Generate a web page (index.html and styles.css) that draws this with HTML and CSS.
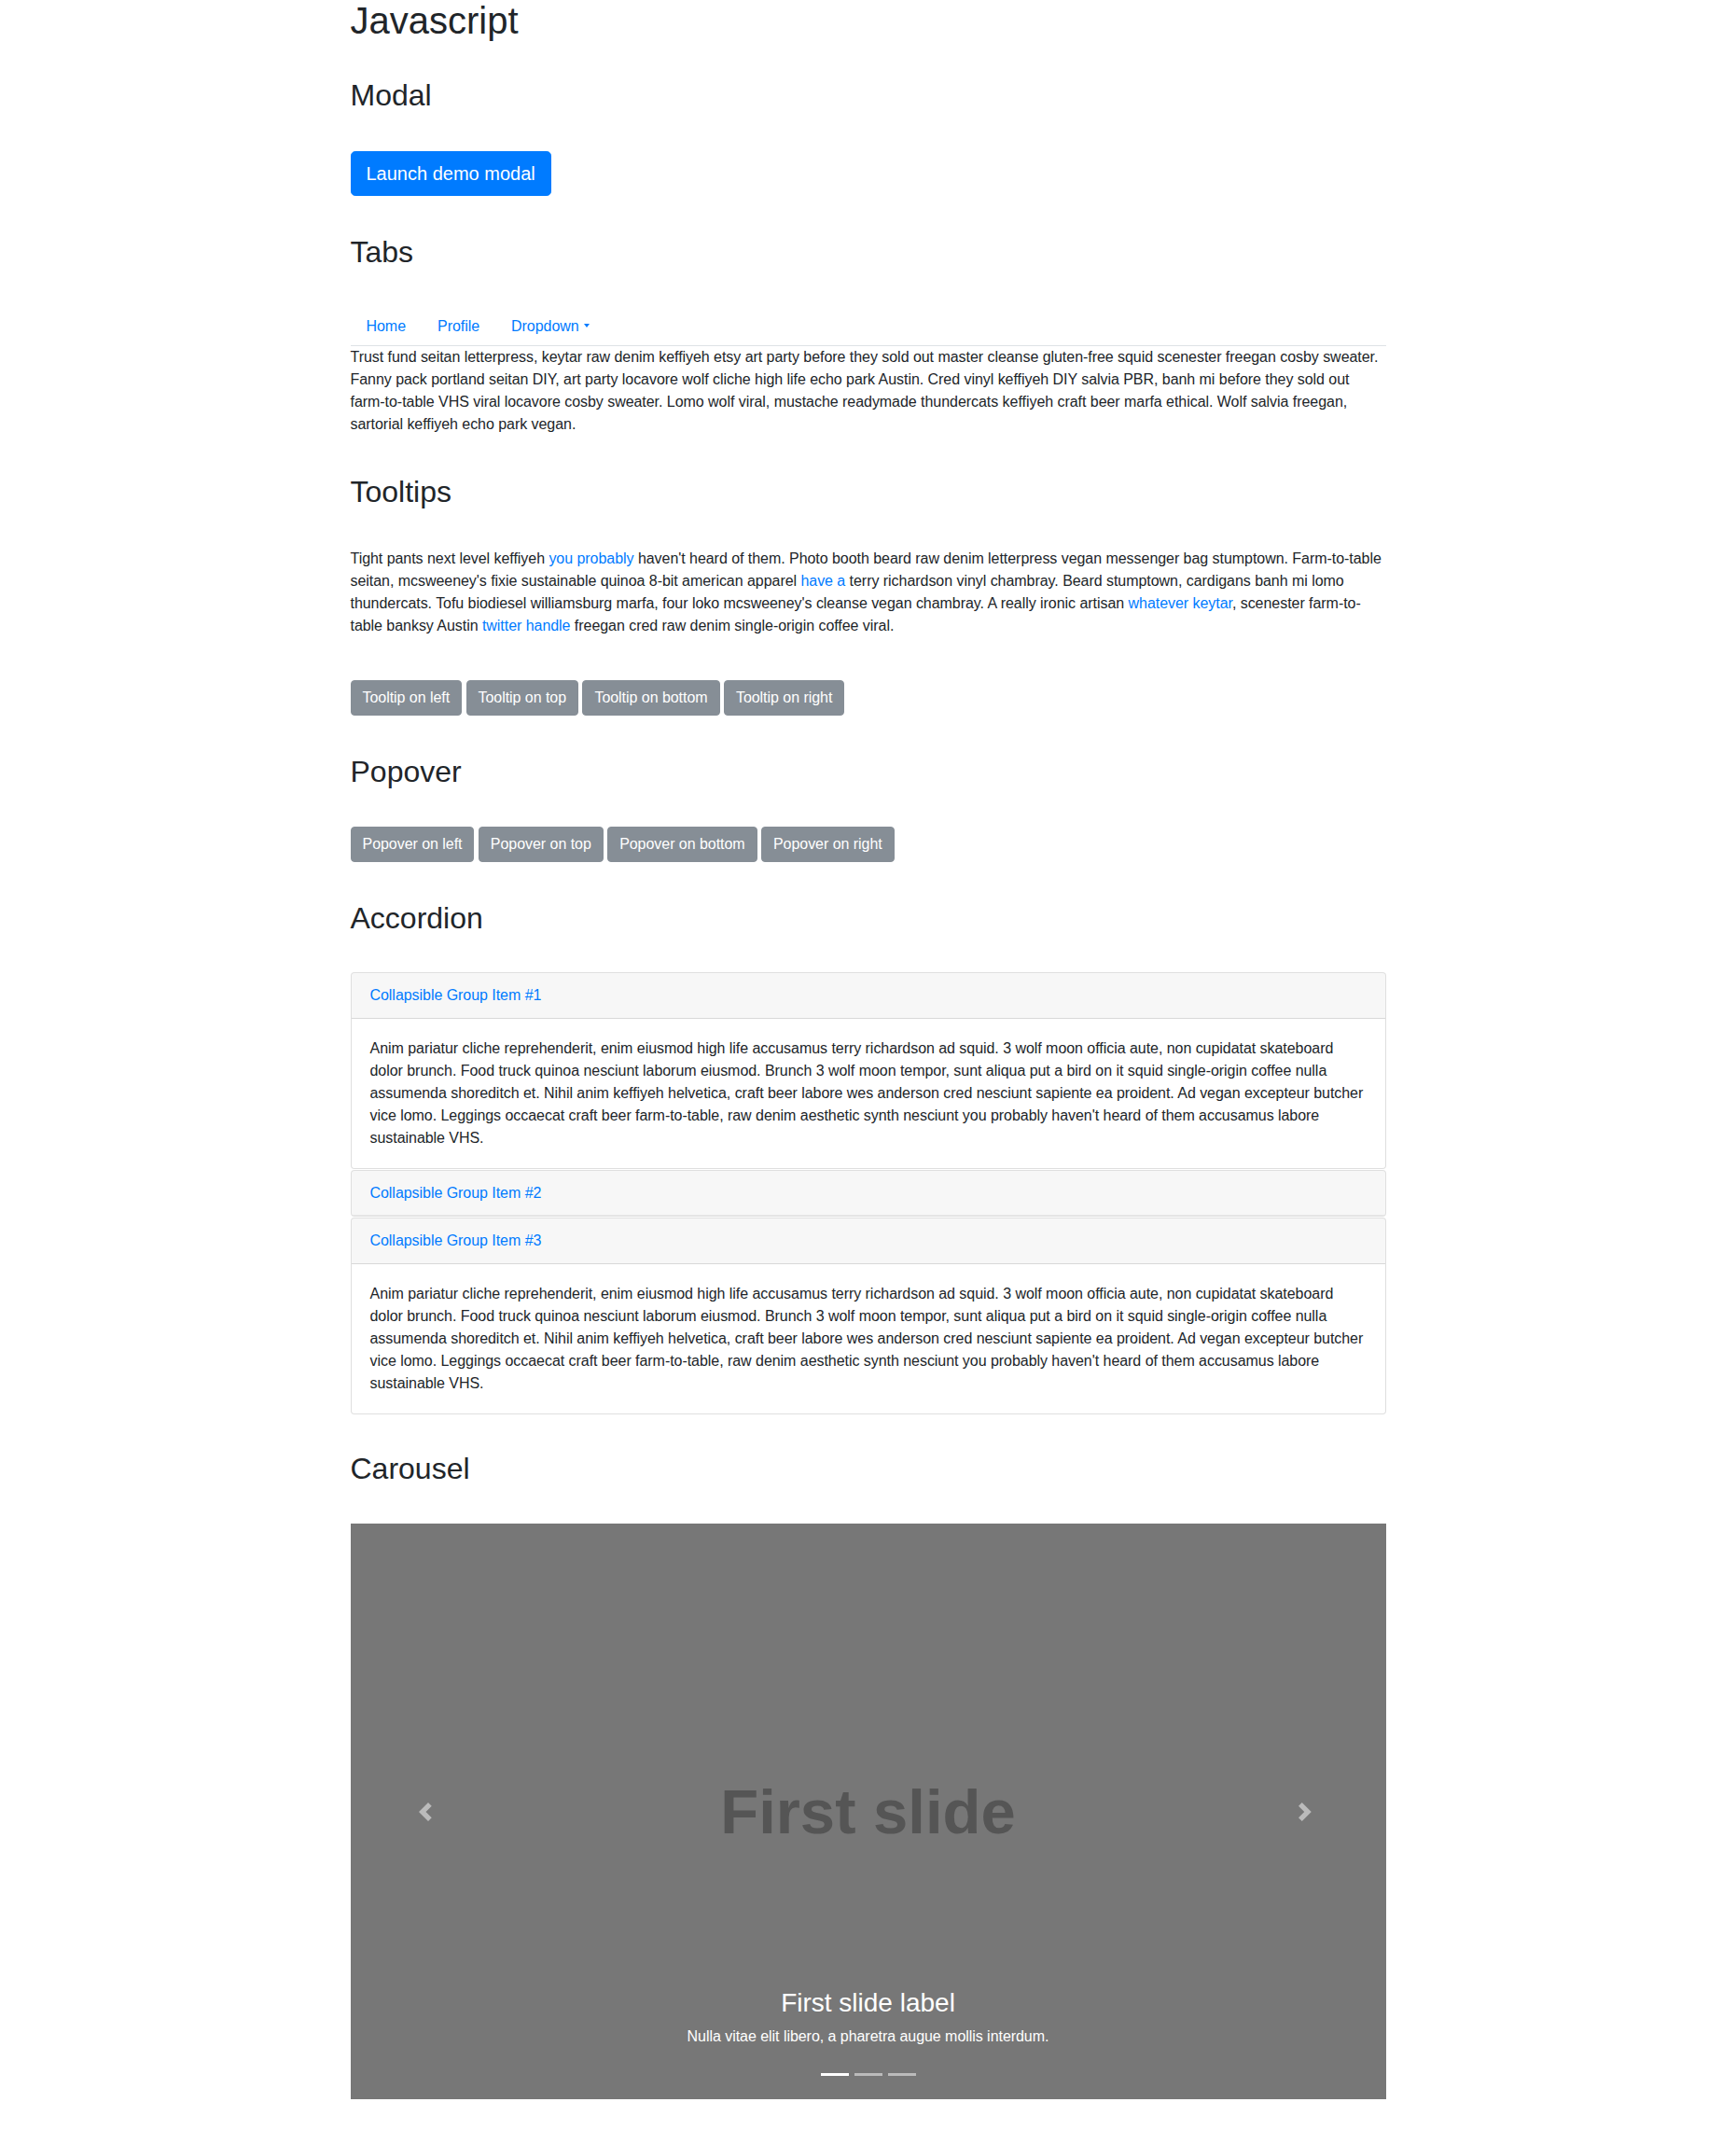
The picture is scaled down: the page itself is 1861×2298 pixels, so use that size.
FILE: index.html
```html
<!DOCTYPE html>
<html lang="en">
<head>
<meta charset="utf-8">
<title>Javascript</title>
<link rel="stylesheet" href="styles.css">
</head>
<body>
<div class="container">
  <h1 class="page-title">Javascript</h1>

  <section class="section section-first">
    <h2 class="section-title">Modal</h2>
    <button class="btn btn-primary btn-lg" type="button">Launch demo modal</button>
  </section>

  <section class="section">
    <h2 class="section-title title-tabs">Tabs</h2>
    <ul class="nav-tabs">
      <li class="nav-item"><a class="nav-link" href="#">Home</a></li>
      <li class="nav-item"><a class="nav-link" href="#">Profile</a></li>
      <li class="nav-item"><a class="nav-link" href="#">Dropdown<span class="caret"></span></a></li>
    </ul>
    <p class="tab-pane">Trust fund seitan letterpress, keytar raw denim keffiyeh etsy art party before they sold out master cleanse gluten-free squid scenester freegan cosby sweater. Fanny pack portland seitan DIY, art party locavore wolf cliche high life echo park Austin. Cred vinyl keffiyeh DIY salvia PBR, banh mi before they sold out farm-to-table VHS viral locavore cosby sweater. Lomo wolf viral, mustache readymade thundercats keffiyeh craft beer marfa ethical. Wolf salvia freegan, sartorial keffiyeh echo park vegan.</p>
  </section>

  <section class="section">
    <h2 class="section-title">Tooltips</h2>
    <p class="tooltip-text">Tight pants next level keffiyeh <a href="#">you probably</a> haven't heard of them. Photo booth beard raw denim letterpress vegan messenger bag stumptown. Farm-to-table seitan, mcsweeney's fixie sustainable quinoa 8-bit american apparel <a href="#">have a</a> terry richardson vinyl chambray. Beard stumptown, cardigans banh mi lomo thundercats. Tofu biodiesel williamsburg marfa, four loko mcsweeney's cleanse vegan chambray. A really ironic artisan <a href="#">whatever keytar</a>, scenester farm-to-table banksy Austin <a href="#">twitter handle</a> freegan cred raw denim single-origin coffee viral.</p>
    <div class="btn-row">
      <button class="btn btn-secondary" type="button">Tooltip on left</button>
      <button class="btn btn-secondary" type="button">Tooltip on top</button>
      <button class="btn btn-secondary" type="button">Tooltip on bottom</button>
      <button class="btn btn-secondary" type="button">Tooltip on right</button>
    </div>
  </section>

  <section class="section">
    <h2 class="section-title title-popover">Popover</h2>
    <div class="btn-row">
      <button class="btn btn-secondary" type="button">Popover on left</button>
      <button class="btn btn-secondary" type="button">Popover on top</button>
      <button class="btn btn-secondary" type="button">Popover on bottom</button>
      <button class="btn btn-secondary" type="button">Popover on right</button>
    </div>
  </section>

  <section class="section">
    <h2 class="section-title title-accordion">Accordion</h2>
    <div class="accordion">
      <div class="card">
        <div class="card-header"><a href="#">Collapsible Group Item #1</a></div>
        <div class="card-body">Anim pariatur cliche reprehenderit, enim eiusmod high life accusamus terry richardson ad squid. 3 wolf moon officia aute, non cupidatat skateboard dolor brunch. Food truck quinoa nesciunt laborum eiusmod. Brunch 3 wolf moon tempor, sunt aliqua put a bird on it squid single-origin coffee nulla assumenda shoreditch et. Nihil anim keffiyeh helvetica, craft beer labore wes anderson cred nesciunt sapiente ea proident. Ad vegan excepteur butcher vice lomo. Leggings occaecat craft beer farm-to-table, raw denim aesthetic synth nesciunt you probably haven't heard of them accusamus labore sustainable VHS.</div>
      </div>
      <div class="card card-collapsed">
        <div class="card-header"><a href="#">Collapsible Group Item #2</a></div>
      </div>
      <div class="card">
        <div class="card-header"><a href="#">Collapsible Group Item #3</a></div>
        <div class="card-body">Anim pariatur cliche reprehenderit, enim eiusmod high life accusamus terry richardson ad squid. 3 wolf moon officia aute, non cupidatat skateboard dolor brunch. Food truck quinoa nesciunt laborum eiusmod. Brunch 3 wolf moon tempor, sunt aliqua put a bird on it squid single-origin coffee nulla assumenda shoreditch et. Nihil anim keffiyeh helvetica, craft beer labore wes anderson cred nesciunt sapiente ea proident. Ad vegan excepteur butcher vice lomo. Leggings occaecat craft beer farm-to-table, raw denim aesthetic synth nesciunt you probably haven't heard of them accusamus labore sustainable VHS.</div>
      </div>
    </div>
  </section>

  <section class="section section-carousel">
    <h2 class="section-title title-carousel">Carousel</h2>
    <div class="carousel">
      <div class="slide-text">First slide</div>
      <a class="carousel-control control-prev" href="#" aria-label="Previous">
        <svg width="20" height="20" viewBox="0 0 8 8"><path fill="#fff" d="M4 0l-4 4 4 4 1.5-1.5-2.5-2.5 2.5-2.5-1.5-1.5z"/></svg>
      </a>
      <a class="carousel-control control-next" href="#" aria-label="Next">
        <svg width="20" height="20" viewBox="0 0 8 8"><path fill="#fff" d="M1.5 0l-1.5 1.5 2.5 2.5-2.5 2.5 1.5 1.5 4-4-4-4z"/></svg>
      </a>
      <div class="carousel-caption">
        <h3 class="caption-title">First slide label</h3>
        <p class="caption-text">Nulla vitae elit libero, a pharetra augue mollis interdum.</p>
      </div>
      <ol class="carousel-indicators">
        <li class="indicator active"></li>
        <li class="indicator"></li>
        <li class="indicator"></li>
      </ol>
    </div>
  </section>
</div>
</body>
</html>
```

FILE: styles.css
```css
* {
  box-sizing: border-box;
}

html,
body {
  margin: 0;
  padding: 0;
}

body {
  font-family: "Liberation Sans", Arial, Helvetica, sans-serif;
  font-size: 16px;
  line-height: 1.5;
  letter-spacing: -0.045px;
  color: #212529;
  background: #fff;
}

a {
  color: #007bff;
  text-decoration: none;
}

p {
  margin: 0;
}

.container {
  width: 1140px;
  margin: 0 auto;
  padding: 0 15px 48px;
}

.page-title {
  margin: 0;
  font-size: 40px;
  line-height: 44px;
  font-weight: 400;
  letter-spacing: 0;
}

.section {
  margin-top: 43.3px;
}

.section-first {
  margin-top: 41.3px;
}

.section-carousel {
  margin-top: 41.3px;
}

.section-title {
  margin: 0 0 41.5px;
  font-size: 32px;
  line-height: 35.2px;
  font-weight: 400;
  letter-spacing: 0;
}

.title-tabs {
  margin-bottom: 40px;
}

.title-popover,
.title-carousel {
  margin-bottom: 40.5px;
}

.title-accordion {
  margin-bottom: 39.5px;
}

/* Buttons */
.btn {
  display: inline-block;
  font-family: inherit;
  font-size: 16px;
  line-height: 24px;
  letter-spacing: inherit;
  padding: 6px 12px;
  border: 1px solid transparent;
  border-radius: 4px;
  cursor: pointer;
  white-space: nowrap;
}

.btn-primary {
  background: #007bff;
  border-color: #007bff;
  color: #fff;
}

.btn-lg {
  font-size: 20px;
  line-height: 30px;
  letter-spacing: 0;
  padding: 8px 16px;
  border-radius: 4.8px;
}

.btn-secondary {
  background: #868e96;
  border-color: #868e96;
  color: #fff;
}

.btn-row {
  display: flex;
  gap: 4.4px;
}

/* Tabs */
.nav-tabs {
  display: flex;
  list-style: none;
  margin: 0;
  padding: 0;
  border-bottom: 1px solid #dee2e6;
}

.nav-item {
  margin-bottom: -1px;
}

.nav-link {
  display: block;
  padding: 8px 16px;
  border: 1px solid transparent;
  border-radius: 4px 4px 0 0;
}

.caret {
  display: inline-block;
  width: 0;
  height: 0;
  margin-left: 5px;
  vertical-align: 4px;
  border-top: 4px solid #007bff;
  border-left: 3px solid transparent;
  border-right: 3px solid transparent;
}

.tooltip-text {
  margin-bottom: 46.5px;
}

/* Accordion */
.card {
  border: 1px solid rgba(0, 0, 0, 0.125);
  border-radius: 4px;
  background: #fff;
  overflow: hidden;
}

.card + .card {
  margin-top: 1px;
}

.card-header {
  padding: 12px 20px;
  background: rgba(0, 0, 0, 0.03);
  border-bottom: 1px solid rgba(0, 0, 0, 0.125);
}

.card-collapsed .card-header {
  border-bottom: 0;
  box-shadow: inset 0 -1px 0 rgba(0, 0, 0, 0.06);
}

.card-body {
  padding: 20px;
}

/* Carousel */
.carousel {
  position: relative;
  height: 617px;
  background: #777;
  display: flex;
  align-items: center;
  justify-content: center;
  overflow: hidden;
}

.slide-text {
  font-size: 67px;
  font-weight: 700;
  line-height: 1;
  letter-spacing: 0;
  color: #555;
}

.carousel-control {
  position: absolute;
  top: 0;
  bottom: 0;
  width: 15%;
  display: flex;
  align-items: center;
  justify-content: center;
  opacity: 0.5;
}

.control-prev {
  left: 0;
}

.control-next {
  right: 0;
}

.carousel-control svg {
  display: block;
}

.carousel-caption {
  position: absolute;
  left: 15%;
  right: 15%;
  bottom: 19px;
  padding: 20px 0;
  text-align: center;
  color: #fff;
}

.caption-title {
  margin: 0 0 8px;
  font-size: 28px;
  line-height: 30.8px;
  font-weight: 400;
  letter-spacing: 0;
}

.caption-text {
  margin: 0 0 16px;
}

.carousel-indicators {
  position: absolute;
  left: 0;
  right: 0;
  bottom: 25px;
  margin: 0;
  padding: 0;
  list-style: none;
  display: flex;
  justify-content: center;
  gap: 6px;
}

.indicator {
  width: 30px;
  height: 3px;
  background: rgba(255, 255, 255, 0.5);
}

.indicator.active {
  background: #fff;
}
```
